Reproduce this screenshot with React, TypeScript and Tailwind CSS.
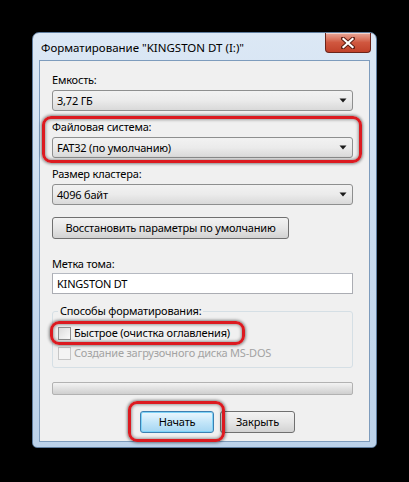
import React from 'react';

const font = { fontFamily: '"Noto Sans", "Open Sans", sans-serif' };

function Combo({ value }: { value: string }) {
  return (
    <div className="w-[301px] h-[21px] flex items-center justify-between rounded-[3px] border border-[#8e8f8f] bg-gradient-to-b from-[#f2f2f2] via-[#ebebeb] to-[#d9d9d9] pl-[4px] pr-[5px] text-black">
      <span className="leading-[16px]">{value}</span>
      <svg width="8" height="5" viewBox="0 0 8 5">
        <path d="M0.5 0.5 L7.5 0.5 L4 4.5 Z" fill="#1a1a1a" />
      </svg>
    </div>
  );
}

function Ring({ className }: { className: string }) {
  return (
    <div
      className={`absolute rounded-[9px] border-[3px] border-[#dc1a20] shadow-[0_0_3px_1px_rgba(0,0,0,0.45),inset_0_0_3px_1px_rgba(0,0,0,0.35)] pointer-events-none ${className}`}
    />
  );
}

function Checkbox({ disabled }: { disabled?: boolean }) {
  return (
    <div
      className={`shrink-0 w-[13px] h-[13px] border ${
        disabled ? 'border-[#c6c6c6] bg-[#f4f4f4]' : 'border-[#8f8f8f] bg-gradient-to-br from-[#dcdcdc] to-[#fbfbfb]'
      }`}
    />
  );
}

export default function App() {
  return (
    <div className="w-[409px] h-[482px] bg-black pt-[32px] pl-[32px] whitespace-nowrap" style={font}>
      {/* window */}
      <div className="w-[345px] h-[416px] flex flex-col rounded-t-[7px] rounded-b-[5px] border border-[#5f7d9e] bg-gradient-to-b from-[#dce8f5] via-[#c9dbef] to-[#bcd2ea] px-[6px] pb-[5px]">
        {/* title bar */}
        <div className="h-[27px] flex items-start justify-between">
          <span className="mt-[7px] ml-[2px] text-[11.5px] leading-[16px] text-black">
            Форматирование "KINGSTON DT (I:)"
          </span>
          <div className="w-[46px] h-[20px] -mr-[1px] flex items-center justify-center rounded-b-[4px] border border-t-0 border-[#6b241a] bg-gradient-to-b from-[#e7a799] via-[#d0573f] to-[#c1412a] shadow-[inset_0_1px_0_rgba(255,255,255,0.5)]">
            <svg width="14" height="12" viewBox="0 0 14 12">
              <path d="M2 1.5 L12 10.5 M12 1.5 L2 10.5" stroke="#5a1d14" strokeWidth="4" strokeLinecap="square" />
              <path d="M2.5 2 L11.5 10 M11.5 2 L2.5 10" stroke="#ffffff" strokeWidth="2.2" strokeLinecap="square" />
            </svg>
          </div>
        </div>

        {/* client area */}
        <div className="flex-1 flex flex-col border border-[#7e9cbd] bg-[#f0f0f0] pl-[12px] pt-[11px] text-[11px] tracking-[-0.2px] leading-[16px] text-black">
          <span>Емкость:</span>
          <div className="mt-[2px]">
            <Combo value="3,72 ГБ" />
          </div>

          <div className="relative mt-[8px] w-[301px]">
            <span>Файловая система:</span>
            <div className="mt-[2px]">
              <Combo value="FAT32 (по умолчанию)" />
            </div>
            <Ring className="-left-[10px] -right-[9px] -top-[3px] -bottom-[5px]" />
          </div>

          <span className="mt-[8px]">Размер кластера:</span>
          <div className="mt-[2px]">
            <Combo value="4096 байт" />
          </div>

          <div className="mt-[12px] w-[237px] h-[22px] flex items-center justify-center rounded-[3px] border border-[#707070] bg-gradient-to-b from-[#f3f3f3] via-[#e6e6e6] to-[#d2d2d2]">
            Восстановить параметры по умолчанию
          </div>

          <span className="mt-[17px]">Метка тома:</span>
          <div className="mt-[1px] w-[301px] h-[21px] flex items-center border border-[#abadb3] border-t-[#b5b9c1] bg-white pl-[4px]">
            KINGSTON DT
          </div>

          <fieldset className="mt-[9px] w-[301px] h-[65px] rounded-[3px] border border-[#d5dfe5] pl-[5px]">
            <legend className="px-[2px]">Способы форматирования:</legend>
            <div className="relative mt-[6px] flex items-center gap-[3px] w-[180px] h-[16px]">
              <Checkbox />
              <span>Быстрое (очистка оглавления)</span>
              <Ring className="-left-[8px] -right-[7px] -top-[4px] -bottom-[4px]" />
            </div>
            <div className="mt-[4px] flex items-center gap-[3px] h-[16px] text-[#a3a3a3]">
              <Checkbox disabled />
              <span>Создание загрузочного диска MS-DOS</span>
            </div>
          </fieldset>

          <div className="mt-[14px] w-[301px] h-[13px] rounded-[2px] border border-[#b2b2b2] bg-gradient-to-b from-[#f3f3f3] via-[#e1e1e1] to-[#cfcfcf]" />

          <div className="mt-[16px] pl-[88px] flex gap-[6px]">
            <div className="relative">
              <div className="w-[74px] h-[22px] flex items-center justify-center rounded-[3px] border border-[#3c7fb1] bg-gradient-to-b from-[#ecf7fd] via-[#c4e6f9] to-[#a5d6f2] shadow-[inset_0_0_0_1px_#7fd3f7]">
                Начать
              </div>
              <Ring className="-left-[12px] -right-[11px] -top-[10px] -bottom-[9px]" />
            </div>
            <div className="w-[75px] h-[22px] flex items-center justify-center rounded-[3px] border border-[#707070] bg-gradient-to-b from-[#f3f3f3] via-[#e6e6e6] to-[#d2d2d2]">
              Закрыть
            </div>
          </div>
        </div>
      </div>
    </div>
  );
}
